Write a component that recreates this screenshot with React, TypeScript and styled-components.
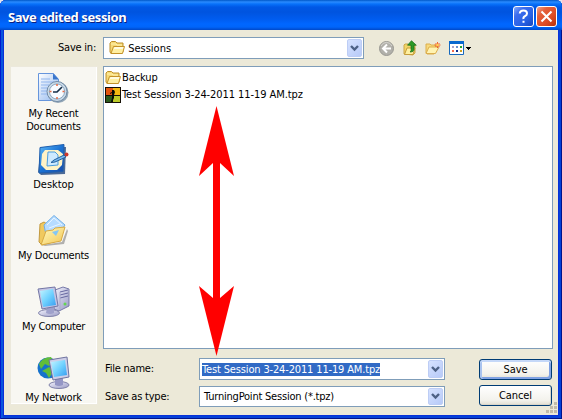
import React from 'react';
import styled, { createGlobalStyle } from 'styled-components';

const Global = createGlobalStyle`
  * { box-sizing: border-box; }
  body { margin: 0; width: 562px; height: 420px; overflow: hidden; background: #e4e6ee; }
  svg { display: block; flex: none; }
`;

const Window = styled.div`
  position: relative;
  width: 562px;
  height: 419px;
  display: flex;
  flex-direction: column;
  padding: 0 4px 4px;
  background: #0831d9;
  border-radius: 6px 6px 0 0;
  box-shadow: inset 1px 0 #0019cf, inset -1px -1px #00138c, inset 3px 0 #0855dd, inset -3px -3px #0441d8;
  font-family: 'DejaVu Sans Condensed', 'DejaVu Sans', sans-serif;
  font-stretch: condensed;
  font-size: 11px;
  line-height: 13px;
  color: #000;
`;

const TitleBar = styled.header`
  height: 30px;
  margin: 0 -4px;
  padding: 5px 5px 0 8px;
  display: flex;
  gap: 2px;
  border-radius: 6px 6px 0 0;
  background: linear-gradient(#0058c8 0, #2a8bff 2px, #0872fa 4px, #0058e6 7px, #0054df 12px, #005cef 19px, #0067ff 24px, #0065fa 27px, #0048c8 30px);
`;

const Title = styled.h1`
  flex: 1;
  margin: 0;
  font: 700 13px/24px 'Noto Sans', 'Open Sans', sans-serif;
  letter-spacing: -0.42px;
  color: #fff;
  text-shadow: 1px 1px #0b1f80;
`;

const CaptionButton = styled.button<{ $close?: boolean }>`
  width: 21px;
  height: 21px;
  margin-top: 1px;
  padding: 0;
  display: grid;
  place-items: center;
  border: 1px solid #fff;
  border-radius: 3px;
  background: ${p => p.$close
    ? 'linear-gradient(135deg, #f0a18b, #e4603b 28%, #dd4c25 65%, #b7310c)'
    : 'linear-gradient(135deg, #83a9fa, #3c6ced 28%, #2862e5 65%, #1746be)'};
`;

const Body = styled.main`
  flex: 1;
  display: flex;
  flex-direction: column;
  background: #ece9d8;
`;

const LookIn = styled.div`
  height: 36px;
  padding: 7px 0 0 54px;
  display: flex;
`;

const Caption = styled.label<{ $width: number; $spacing?: number }>`
  width: ${p => p.$width}px;
  line-height: 22px;
  letter-spacing: ${p => p.$spacing ?? -0.22}px;
  white-space: nowrap;
`;

const Combo = styled.div<{ $width: number; $height?: number; $indent?: number }>`
  width: ${p => p.$width}px;
  height: ${p => p.$height ?? 22}px;
  padding: 1px 1px 1px ${p => p.$indent ?? 2}px;
  display: flex;
  align-items: center;
  background: #fff;
  border: 1px solid #7f9db9;
`;

const Value = styled.span<{ $spacing?: number; $selected?: boolean; $width?: number }>`
  letter-spacing: ${p => p.$spacing ?? 0}px;
  width: ${p => (p.$width ? `${p.$width}px` : 'auto')};
  white-space: nowrap;
  color: ${p => (p.$selected ? '#fff' : '#000')};
  background: ${p => (p.$selected ? '#316ac5' : 'transparent')};
`;

const DropButton = styled.button`
  width: 15px;
  height: 100%;
  margin-left: auto;
  padding: 0;
  display: grid;
  place-items: center;
  border: 1px solid #bdcdf5;
  border-radius: 2px;
  background: linear-gradient(135deg, #d6e2ff, #b7caf8);
`;

const Tools = styled.nav`
  height: 22px;
  margin-left: 15px;
  display: flex;
  align-items: center;
`;

const Tool = styled.span<{ $gap: number }>`margin-right: ${p => p.$gap}px;`;

const Content = styled.div`
  flex: 1;
  padding-left: 7px;
  display: flex;
  gap: 6px;
`;

const Places = styled.aside`
  width: 86px;
  height: 337px;
  margin-top: 1px;
  padding-top: 5px;
  background: #f8f7f2;
  border: solid #fff;
  border-width: 0 1px 1px 0;
  box-shadow: 0 0 0 1px #ece9dc;
`;

const Place = styled.div`
  height: 71px;
  display: flex;
  flex-direction: column;
  align-items: center;
  text-align: center;
`;

const PlaceName = styled.span<{ $spacing: number }>`
  margin-top: 2px;
  letter-spacing: ${p => p.$spacing}px;
  white-space: pre;
`;

const Main = styled.section`width: 450px;`;

const FileList = styled.div`
  height: 283px;
  padding: 2px 1px;
  background: #fff;
  border: 1px solid #7f9db9;
`;

const FileRow = styled.div`
  height: 17px;
  display: flex;
  align-items: center;
  gap: 1px;
`;

const Form = styled.div`
  padding: 9px 1px 0 2px;
  display: flex;
  justify-content: space-between;
`;

const Fields = styled.div`
  display: grid;
  gap: 6px;
`;

const Field = styled.div`display: flex;`;

const Actions = styled.div`
  padding-top: 1px;
  display: flex;
  flex-direction: column;
  gap: 5px;
`;

const Button = styled.button<{ $primary?: boolean }>`
  width: 73px;
  height: 21px;
  padding: 0 0 1px;
  font: inherit;
  letter-spacing: -0.1px;
  color: #000;
  border: 1px solid #003c74;
  border-radius: 3px;
  background: linear-gradient(#fff, #f3f2ec 75%, #e1ded2);
  box-shadow: ${p => (p.$primary ? 'inset 0 2px #c5d8f8, inset 2px 0 #a9c3ef, inset -2px -2px #7fa1e3' : 'inset -1px -1px #dad6c9')};
`;

const Arrow = styled.svg`
  position: absolute;
  left: 199px;
  top: 106px;
  pointer-events: none;
`;

const Grip = styled.svg`
  position: absolute;
  right: 4px;
  bottom: 5px;
`;

const Chevron = () => (
  <svg width="9" height="7" viewBox="0 0 9 7"><path d="M1 1l3.500 3.500L8 1" fill="none" stroke="#4d6185" strokeWidth="2.4" /></svg>
);

const Folder = () => (
  <svg width="16" height="16" viewBox="0 0 16 16">
    <path d="M1 12V3l1.500-1.500h4L8 3h6v9l-1.500 1.500H2z" fill="#f6d976" stroke="#bd8f2a" />
    <path d="M2 4h5l1 1h5" fill="none" stroke="#fff3b1" />
    <path d="M2 13.500L4.500 6.500H15.500L13.500 13.500z" fill="#ffefa2" stroke="#c4922a" />
    <path d="M5.500 7.500h8.700M5 8.500h9" stroke="#fffbe0" />
  </svg>
);

const SessionIcon = () => (
  <svg width="16" height="16" viewBox="0 0 16 16">
    <path fill="#151006" d="M0 0h16v16H0z" /><path fill="#e5560f" d="M1 1h7v7H1z" />
    <path fill="#f5b90f" d="M8 1h7v7H8z" /><path fill="#2c5a1c" d="M1 9h6v6H1z" /><path fill="#bccb2a" d="M8 9h7v6H8z" />
    <path fill="#080b04" d="M7 3h2l1 2-1 3v3l-2 4H6l1-4V6L5 7V6l2-1z" />
  </svg>
);

const BackIcon = () => (
  <svg width="15" height="15" viewBox="0 0 15 15">
    <circle cx="7.5" cy="7.5" r="7" fill="#b1b0aa" stroke="#999892" /><path d="M2 5a6 6 0 0 1 11 0" fill="none" stroke="#d5d4ce" />
    <path d="M8 3.500l-4 4 4 4M4.500 7.500H12" fill="none" stroke="#fff" strokeWidth="2" />
  </svg>
);

const UpIcon = () => (
  <svg width="14" height="16" viewBox="0 0 14 16">
    <path d="M1 14V5l1-1h3l1 1h6v8l-2 2z" fill="#f2d568" stroke="#cda648" />
    <path d="M1.500 14.500L4 8h8l-2 6.500z" fill="#fff0a0" stroke="#c59d3b" />
    <path d="M8.500 .7l4.800 4.500H11V9c0 2-1 3-4 3 1.200-1 1.200-2 1-3V5.200H4.500z" fill="#2c9926" stroke="#126b17" strokeWidth=".7" />
  </svg>
);

const NewFolderIcon = () => (
  <svg width="16" height="14" viewBox="0 0 16 14">
    <path d="M1 12V3h4l1 1h5v7l-2 2H2z" fill="#f7d97c" stroke="#dcae4c" />
    <path d="M1 12.500L4 6h10l-3.500 6.500z" fill="#fff3b2" stroke="#dcae4c" />
    <path d="M12.500 1v6M9.500 4h6M10.500 2l4 4M14.500 2l-4 4" stroke="#f05021" strokeWidth=".9" /><circle cx="12.5" cy="4" r="1.3" fill="#ffd24f" />
  </svg>
);

const ViewIcon = () => (
  <svg width="22" height="14" viewBox="0 0 22 14">
    <path d="M.5.5h14v13H.5z" fill="#fff" stroke="#1769bd" /><path d="M0 0h15v3H0z" fill="#0869cf" />
    <path fill="#a9a4cc" d="M3 5h2v2H3z" /><path fill="#6a91cd" d="M7 5h2v2H7z" /><path fill="#26a52c" d="M11 5h2v2h-2z" />
    <path fill="#f36b4d" d="M3 9h2v2H3z" /><path fill="#102e8e" d="M7 9h2v2H7z" /><path fill="#d1a01e" d="M11 9h2v2h-2z" />
    <path d="M17 6h5v1h-1v1h-1v1h-1V8h-1V7h-1z" />
  </svg>
);

const Gradients = () => (
  <svg width="0" height="0">
    <defs>
      <linearGradient id="screen" x2="1" y2="1"><stop stopColor="#c4f4ff" /><stop offset=".5" stopColor="#70d2ff" /><stop offset="1" stopColor="#369cf0" /></linearGradient>
      <linearGradient id="case" x2="1" y2="1"><stop stopColor="#f4f4fe" /><stop offset="1" stopColor="#9798c4" /></linearGradient>
      <linearGradient id="page" x2="1" y2="1"><stop stopColor="#fff" /><stop offset="1" stopColor="#8fb6ef" /></linearGradient>
      <linearGradient id="gold" x2="1" y2="1"><stop stopColor="#fffbc4" /><stop offset="1" stopColor="#f3c650" /></linearGradient>
      <linearGradient id="navy" x2="1" y2="1"><stop stopColor="#5bb8f8" /><stop offset=".5" stopColor="#1b72d4" /><stop offset="1" stopColor="#174ba8" /></linearGradient>
    </defs>
  </svg>
);

const RecentIcon = () => (
  <svg width="33" height="33" viewBox="0 0 33 33">
    <path d="M1.500 1.500h15l5 6v21h-20z" fill="url(#page)" stroke="#6695dc" /><path d="M16 1.500v6h6z" fill="#3976cc" />
    <path d="M4 7h9M4 10h13M4 13h8M4 16h6M4 19h6M4 22h6" stroke="#91b5ec" />
    <circle cx="21" cy="20.5" r="10.5" fill="#92a6b7" /><circle cx="20" cy="19.5" r="10" fill="#cbdbe8" stroke="#718ba6" />
    <circle cx="20" cy="19.5" r="7.6" fill="#f8fbff" stroke="#8ba6c1" />
    <path d="M20 12v2M20 25v2M12.500 19.500h2M25.500 19.500h2" stroke="#e86b44" strokeWidth="1.5" />
    <path d="M25 15l-5 5h-4" fill="none" stroke="#172f48" strokeWidth="1.7" />
  </svg>
);

const DesktopIcon = () => (
  <svg width="33" height="33" viewBox="0 0 33 33">
    <path d="M4 4h25l-1 27-24 1L1 29z" fill="#123b78" opacity=".75" />
    <path d="M3 4.500L27 1.500l-1 27L2 30z" fill="url(#navy)" stroke="#205fae" />
    <path d="M8 7h13l5 4-1 11-5 5H9l-5-5 1-11z" fill="#fff3c6" />
    <path d="M11 9h7l3 3v10l-11 1z" fill="#cdeaff" stroke="#4b9ddd" />
    <path d="M17 17l10-5 2 2-11 5-4 .5z" fill="#79baf0" stroke="#225f9c" /><circle cx="29.500" cy="11.500" r="2" fill="#cc382d" />
  </svg>
);

const DocumentsIcon = () => (
  <svg width="33" height="33" viewBox="0 0 33 33">
    <path d="M5 31l20-3 5-13 1 2-4 13-19 2z" fill="#777" opacity=".55" />
    <path d="M3 10l4-2 3 2h14v16L5 31 2 28z" fill="#f0c95f" stroke="#c29940" />
    <path d="M7 11L17 1.500 28 11l-7 10H9z" fill="#b7dcff" stroke="#70aee6" /><path d="M10 11l7-7 8 7M12 14l11-4M13 17l11-4" fill="none" stroke="#e8f5ff" />
    <path d="M4 31l5-14 7-1 2-2 10-1-4 14z" fill="url(#gold)" stroke="#d8aa43" /><path d="M15 18l7-2-3 6z" fill="#83c6f5" />
  </svg>
);

const ComputerIcon = () => (
  <svg width="33" height="33" viewBox="0 0 33 33">
    <path d="M18 5l8-3 6 2v17l-10 5-5-2z" fill="url(#case)" stroke="#777aa9" /><path d="M23 7l8-2M23 10l8-2M23 13l8-2" stroke="#6668a0" />
    <path d="M23 7v17" stroke="#aaaccd" /><circle cx="28" cy="19" r="1.5" fill="#64d551" />
    <ellipse cx="12" cy="28" rx="10.5" ry="3.5" fill="url(#case)" stroke="#8183aa" /><path d="M10 22l7-1v7q-4 2-8 0z" fill="#9fa1cb" />
    <path d="M1 4l17-2 3 19-16 3z" fill="#c4c5e5" stroke="#7477a5" /><path d="M3 6l13-2 3 16-13 2z" fill="url(#screen)" />
  </svg>
);

const NetworkIcon = () => (
  <svg width="33" height="33" viewBox="0 0 33 33">
    <circle cx="11" cy="12" r="10.5" fill="#1672cc" /><path d="M2 8q4-7 12-7l3 5-5 4-4-2-4 5zM12 11l5 3-5 8-3-5-4-2z" fill="#61bd39" />
    <ellipse cx="22" cy="29" rx="10" ry="3.500" fill="url(#case)" stroke="#8183aa" /><path d="M18 22l8-1v8q-4 2-8 0z" fill="#9496c5" />
    <path d="M12 4l18-3 2 20-16 3z" fill="#cdcee8" stroke="#6f739f" /><path d="M14 6l14-2 2 15-13 2z" fill="url(#screen)" />
  </svg>
);

const places = [
  { name: 'My Recent\nDocuments', icon: <RecentIcon />, spacing: -0.2 },
  { name: 'Desktop', icon: <DesktopIcon />, spacing: -0.05 },
  { name: 'My Documents', icon: <DocumentsIcon />, spacing: -0.24 },
  { name: 'My Computer', icon: <ComputerIcon />, spacing: -0.34 },
  { name: 'My Network', icon: <NetworkIcon />, spacing: -0.24 },
];

const sessionFile = 'Test Session 3-24-2011 11-19 AM.tpz';

export default function App() {
  return (
    <>
      <Global />
      <Window>
        <TitleBar>
          <Title>Save edited session</Title>
          <CaptionButton aria-label="Help">
            <svg width="13" height="15" viewBox="0 0 13 15"><path d="M2.700 4.500Q3 1.500 6.500 1.500T10 4.500Q10 6 8 7.200T6.500 10M6.500 11.700v2" fill="none" stroke="#fff" strokeWidth="2" /></svg>
          </CaptionButton>
          <CaptionButton $close aria-label="Close">
            <svg width="13" height="13" viewBox="0 0 13 13"><path d="M1.500 1.500l10 10M11.500 1.500l-10 10" stroke="#fff" strokeWidth="2.1" /></svg>
          </CaptionButton>
        </TitleBar>
        <Body>
          <LookIn>
            <Caption $width={45}>Save in:</Caption>
            <Combo $width={261} $indent={5}>
              <Folder /><Value>&nbsp;Sessions</Value>
              <DropButton aria-label="Open folder list"><Chevron /></DropButton>
            </Combo>
            <Tools>
              <Tool $gap={9}><BackIcon /></Tool>
              <Tool $gap={8}><UpIcon /></Tool>
              <Tool $gap={8}><NewFolderIcon /></Tool>
              <Tool $gap={0}><ViewIcon /></Tool>
            </Tools>
          </LookIn>
          <Content>
            <Places>
              {places.map(p => (
                <Place key={p.name}>{p.icon}<PlaceName $spacing={p.spacing}>{p.name}</PlaceName></Place>
              ))}
            </Places>
            <Main>
              <FileList>
                <FileRow><Folder /><Value $spacing={-0.1}>Backup</Value></FileRow>
                <FileRow><SessionIcon /><Value $spacing={-0.07}>{sessionFile}</Value></FileRow>
              </FileList>
              <Form>
                <Fields>
                  <Field><Caption $width={94}>File name:</Caption>
                    <Combo $width={246}>
                      <Value $selected $width={178} $spacing={-0.15}>{sessionFile}</Value>
                      <DropButton aria-label="Recent names"><Chevron /></DropButton>
                    </Combo>
                  </Field>
                  <Field><Caption $width={94}>Save as type:</Caption>
                    <Combo $width={246} $height={21} $indent={4}>
                      <Value $spacing={-0.21}>TurningPoint Session (*.tpz)</Value>
                      <DropButton aria-label="File types"><Chevron /></DropButton>
                    </Combo>
                  </Field>
                </Fields>
                <Actions><Button $primary>Save</Button><Button>Cancel</Button></Actions>
              </Form>
            </Main>
          </Content>
        </Body>
        <Arrow width="35" height="250" viewBox="0 0 35 250"><path d="M17.500 0L35 70 21 57v135l14-12-17.500 70L0 180l14 12V57L0 70z" fill="#f00" /></Arrow>
        <Grip width="12" height="12" viewBox="0 0 12 12"><path d="M8 0h3v3H8zM4 4h3v3H4zM8 4h3v3H8zM0 8h3v3H0zM4 8h3v3H4zM8 8h3v3H8z" fill="#c1bba9" /></Grip>
      </Window>
      <Gradients />
    </>
  );
}
